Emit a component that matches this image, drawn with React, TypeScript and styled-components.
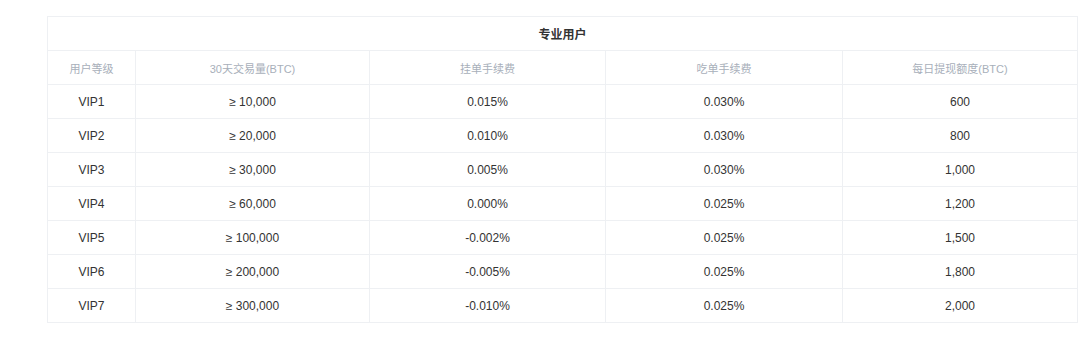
import React from "react";
import styled, { createGlobalStyle } from "styled-components";

const Global = createGlobalStyle`
  html, body { margin: 0; padding: 0; background: #ffffff; }
  body { font-family: "Liberation Sans", "Noto Sans CJK SC", Arial, sans-serif; }
`;

const Page = styled.div`
  padding: 16px 0 0 47px;
`;

const Table = styled.table`
  width: 1030px;
  border-collapse: collapse;
  table-layout: fixed;
  border: 1px solid #eef0f3;
`;

const TitleCell = styled.th`
  height: 33px;
  padding: 0;
  font-size: 12px;
  font-weight: 600;
  color: #333;
  text-align: center;
  border-bottom: 1px solid #eef0f3;
`;

const HeadCell = styled.th`
  height: 33px;
  padding: 0;
  font-size: 11px;
  font-weight: 400;
  color: #a8afba;
  text-align: center;
  border: 1px solid #eef0f3;
`;

const Cell = styled.td`
  height: 33px;
  padding: 0;
  font-size: 12px;
  color: #333;
  text-align: center;
  border: 1px solid #eef0f3;
`;

const widths = [88, 234, 236, 237, 235];
const headers = ["用户等级", "30天交易量(BTC)", "挂单手续费", "吃单手续费", "每日提现额度(BTC)"];
const rows = [
  ["VIP1", "≥ 10,000", "0.015%", "0.030%", "600"],
  ["VIP2", "≥ 20,000", "0.010%", "0.030%", "800"],
  ["VIP3", "≥ 30,000", "0.005%", "0.030%", "1,000"],
  ["VIP4", "≥ 60,000", "0.000%", "0.025%", "1,200"],
  ["VIP5", "≥ 100,000", "-0.002%", "0.025%", "1,500"],
  ["VIP6", "≥ 200,000", "-0.005%", "0.025%", "1,800"],
  ["VIP7", "≥ 300,000", "-0.010%", "0.025%", "2,000"],
];

export default function App() {
  return (
    <>
      <Global />
      <Page>
        <Table>
          <colgroup>
            {widths.map((w, i) => (
              <col key={i} style={{ width: w }} />
            ))}
          </colgroup>
          <thead>
            <tr>
              <TitleCell colSpan={5}>专业用户</TitleCell>
            </tr>
            <tr>
              {headers.map((h) => (
                <HeadCell key={h}>{h}</HeadCell>
              ))}
            </tr>
          </thead>
          <tbody>
            {rows.map((r) => (
              <tr key={r[0]}>
                {r.map((c, i) => (
                  <Cell key={i}>{c}</Cell>
                ))}
              </tr>
            ))}
          </tbody>
        </Table>
      </Page>
    </>
  );
}
